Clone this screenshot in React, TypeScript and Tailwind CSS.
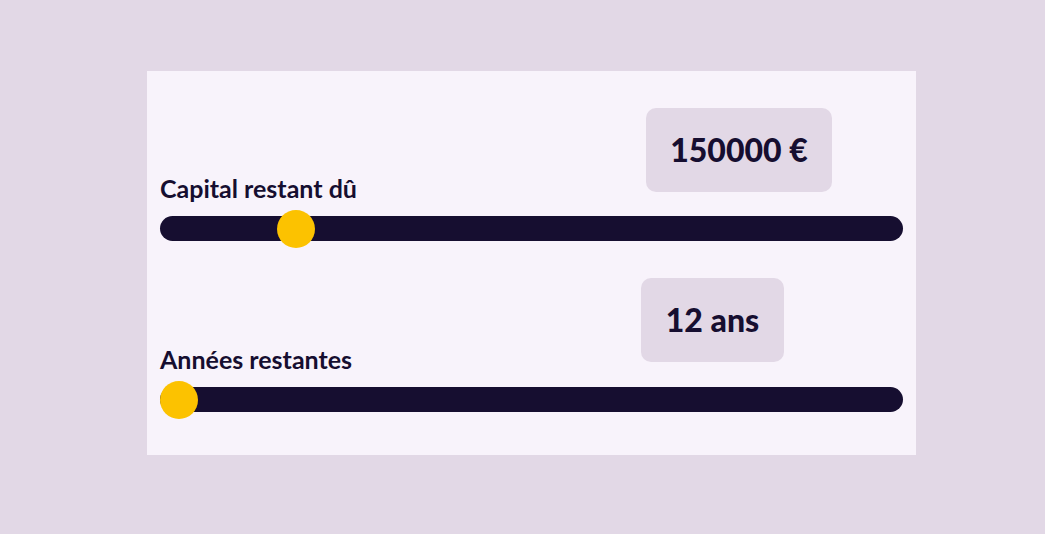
import React from "react";

export default function App() {
  return (
    <div
      className="w-[1045px] h-[534px] bg-[#e2d8e6] pt-[71px] pl-[147px]"
      style={{ fontFamily: "Lato, 'Noto Sans', sans-serif" }}
    >
      <div className="w-[769px] h-[384px] bg-[#f8f3fb] px-[13px] pt-[37px]">
        {/* Section 1 */}
        <div className="relative">
          <div className="flex items-end">
            <span className="w-[486px] shrink-0 text-[25px] leading-none font-bold text-[#160e30] mb-[-9px]">
              Capital restant dû
            </span>
            <div className="w-[186px] h-[84px] rounded-[10px] bg-[#e2d8e6] flex items-center justify-center text-[32px] font-black text-[#160e30] leading-none">
              150000 €
            </div>
          </div>
          <div className="relative h-[25px] mt-[24px] rounded-full bg-[#160e30]">
            <div className="absolute top-1/2 -translate-y-1/2 left-[117px] w-[38px] h-[38px] rounded-full bg-[#fcc200]" />
          </div>
        </div>
        {/* Section 2 */}
        <div className="relative mt-[37px]">
          <div className="flex items-end">
            <span className="w-[481px] shrink-0 text-[25px] leading-none font-bold text-[#160e30] mb-[-10px]">
              Années restantes
            </span>
            <div className="w-[143px] h-[84px] rounded-[10px] bg-[#e2d8e6] flex items-center justify-center text-[32px] font-black text-[#160e30] leading-none">
              12 ans
            </div>
          </div>
          <div className="relative h-[25px] mt-[25px] rounded-full bg-[#160e30]">
            <div className="absolute top-1/2 -translate-y-1/2 left-0 w-[38px] h-[38px] rounded-full bg-[#fcc200]" />
          </div>
        </div>
      </div>
    </div>
  );
}
